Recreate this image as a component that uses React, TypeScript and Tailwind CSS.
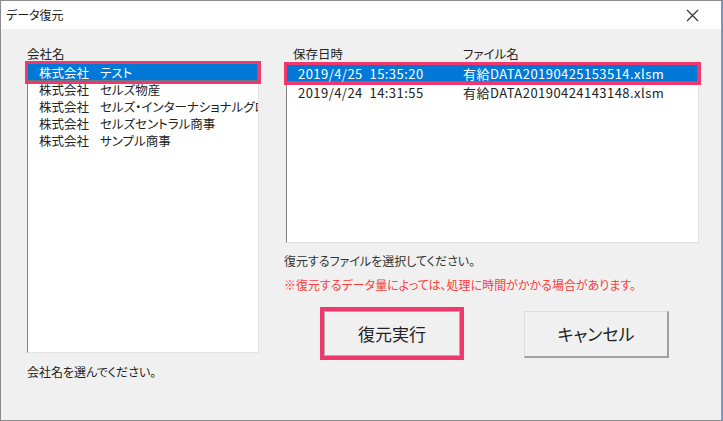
import React from 'react';

const font = { fontFamily: '"Meiryo UI", "Noto Sans CJK JP", "Noto Sans", sans-serif' };

const companies = [
  'テスト',
  'セルズ物産',
  'セルズ・インターナショナルグローバル',
  'セルズセントラル商事',
  'サンプル商事',
];

const files = [
  { date: '2019/4/25  15:35:20', name: '有給DATA20190425153514.xlsm' },
  { date: '2019/4/24  14:31:55', name: '有給DATA20190424143148.xlsm' },
];

export default function App() {
  return (
    <div className="w-[723px] h-[421px] bg-white [font-feature-settings:'palt']" style={font}>
      <div className="flex h-full w-full flex-col border border-[#8c8c8c] border-r-2 border-r-[#6a9bd0]">
        {/* title bar */}
        <div className="flex h-[28px] items-center justify-between bg-white pl-[5px] pr-[22px]">
          <span className="text-[12px] text-[#222]">データ復元</span>
          <svg width="13" height="13" viewBox="0 0 13 13" className="text-[#333]">
            <path d="M1 1 L12 12 M12 1 L1 12" stroke="currentColor" strokeWidth="1.2" />
          </svg>
        </div>

        <div className="flex flex-1 bg-[#f0f0f0] pl-[26px] pt-[17px]">
          {/* left column */}
          <div className="flex w-[232px] flex-col">
            <div className="h-[16px] text-[12.5px] leading-[16px] text-[#222]">会社名</div>
            <div className="h-[291px] border border-t-[#828282] border-l-[#828282] border-r-[#e3e3e3] border-b-[#e3e3e3] bg-white pt-px">
              {companies.map((c, i) => (
                <div
                  key={c}
                  className={
                    i === 0
                      ? 'h-[17px] overflow-hidden whitespace-nowrap bg-[#0078d7] pl-[11px] text-[12.5px] leading-[17px] text-white outline-3 outline-[#f0386f] shadow-[inset_-1px_-1px_0_#6b7785]'
                      : 'h-[17px] overflow-hidden whitespace-nowrap pl-[11px] text-[12.5px] leading-[17px] text-[#222]'
                  }
                >
                  <span>株式会社</span>
                  <span className="ml-[11px]">{c}</span>
                </div>
              ))}
            </div>
            <div className="mt-[10px] text-[12px] text-[#222]">会社名を選んでください。</div>
          </div>

          {/* right column */}
          <div className="ml-[25px] flex w-[415px] flex-col">
            <div className="flex h-[16px] text-[12.5px] leading-[16px] text-[#222]">
              <span className="w-[179px] pl-[9px]">保存日時</span>
              <span>ファイル名</span>
            </div>
            <div className="ml-[2px] h-[181px] border border-t-[#828282] border-l-[#828282] border-r-[#e3e3e3] border-b-[#e3e3e3] bg-white pt-[2px]">
              {files.map((f, i) => (
                <div
                  key={f.name}
                  className={
                    i === 0
                      ? 'flex h-[17px] overflow-hidden whitespace-nowrap bg-[#0078d7] pl-[11px] text-[13px] leading-[17px] tracking-[0.45px] text-white outline-3 outline-[#f0386f] shadow-[inset_-1px_-1px_0_#6b7785]'
                      : 'mt-[2px] flex h-[17px] overflow-hidden whitespace-nowrap pl-[11px] text-[13px] leading-[17px] tracking-[0.45px] text-[#222]'
                  }
                >
                  <span className="w-[165px] whitespace-pre">{f.date}</span>
                  <span>{f.name}</span>
                </div>
              ))}
            </div>
            <div className="mt-[9px] text-[12px] text-[#333]">
              復元するファイルを選択してください。
            </div>
            <div className="mt-[6px] text-[12px] text-[#ff3a3a]">
              ※復元するデータ量によっては、処理に時間がかかる場合があります。
            </div>
            <div className="mt-[13px] flex items-start">
              <div className="ml-[36px] border-4 border-[#f0386f]">
                <button className="flex h-[45px] w-[136px] items-center justify-center border border-[#adadad] bg-[#f0f0f0] text-[17px] text-[#222]">
                  復元実行
                </button>
              </div>
              <button className="ml-[60px] mt-[4px] flex h-[47px] w-[145px] items-center justify-center border border-[#dcdcdc] border-r-2 border-b-2 border-r-[#a0a0a0] border-b-[#a0a0a0] bg-[#f0f0f0] text-[17px] text-[#222]">
                キャンセル
              </button>
            </div>
          </div>
        </div>
      </div>
    </div>
  );
}
